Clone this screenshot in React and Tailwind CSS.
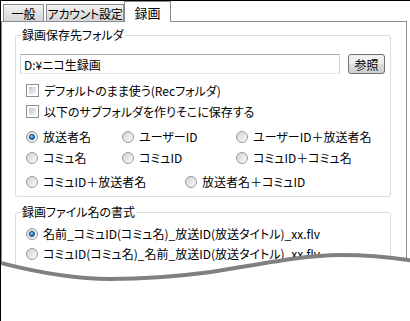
import React from "react";

function Radio({ checked, label, className = "" }) {
  return (
    <div className={"flex items-center h-[13px] " + className}>
      <span className="w-[12px] h-[12px] shrink-0 rounded-full border border-[#9a9a9a] bg-[linear-gradient(135deg,#d2d2d2,#fbfbfb)] flex items-center justify-center">
        {checked && (
          <span className="w-[6px] h-[6px] rounded-full border border-[#0b3e7a] bg-[radial-gradient(circle_at_35%_30%,#9ad8ff,#2a86d8_55%,#0d4e9a)]" />
        )}
      </span>
      <span className="ml-[5px] whitespace-nowrap">{label}</span>
    </div>
  );
}

function Check({ label }) {
  return (
    <div className="flex items-center h-[13px]">
      <span className="w-[13px] h-[13px] shrink-0 border border-[#8e8f8f] bg-white p-[2px] flex">
        <span className="flex-1 bg-[linear-gradient(135deg,#c4c7cb,#f5f5f5)]" />
      </span>
      <span className="ml-[5px] whitespace-nowrap">{label}</span>
    </div>
  );
}

export default function App() {
  return (
    <div className="relative w-[410px] h-[321px] overflow-hidden bg-white border-t border-l border-black text-black text-[12px] leading-[13px] font-['Noto_Sans_CJK_JP','Noto_Sans',sans-serif] [font-feature-settings:'palt']">
      {/* tab strip */}
      <div className="flex items-end h-[20px] pl-[2px]">
        <div className="w-[41px] h-[17px] border border-b-0 border-[#898c95] bg-[linear-gradient(#f3f3f3,#e3e3e3_50%,#d6d6d6)] flex items-center justify-center whitespace-nowrap">
          一般
        </div>
        <div className="ml-[2px] w-[78px] h-[17px] border border-b-0 border-[#898c95] bg-[linear-gradient(#f3f3f3,#e3e3e3_50%,#d6d6d6)] flex items-center justify-center whitespace-nowrap tracking-[-0.3px]">
          アカウント設定
        </div>
        <div className="relative z-10 -mb-[1px] w-[47px] h-[21px] border border-b-0 border-[#898c95] bg-white flex items-center justify-center text-[13px] whitespace-nowrap">
          録画
        </div>
      </div>

      {/* panel */}
      <div className="w-[406px] h-[300px] border border-[#898c95] bg-white pl-[13px] pr-[15px] pt-[6px]">
        <fieldset className="border border-[#d5dfe5] rounded-[3px] pl-[4px] pr-[5px] pb-[8px]">
          <legend className="ml-[1px] px-[1px] leading-[14px] whitespace-nowrap">録画保存先フォルダ</legend>
          <div className="flex items-center pt-[12px]">
            <div className="w-[320px] h-[20px] border border-[#abadb3] border-l-[#d0d6df] border-r-[#d0d6df] border-b-[#e3e9ef] flex items-center pl-[3px] whitespace-nowrap">
              D:¥ニコ生録画
            </div>
            <div className="ml-[8px] w-[37px] h-[20px] rounded-[3px] border border-[#707070] bg-[linear-gradient(#f2f2f2,#ebebeb_50%,#dddddd_50%,#cfcfcf)] flex items-center justify-center whitespace-nowrap">
              参照
            </div>
          </div>
          <div className="ml-[6px] flex flex-col">
            <div className="mt-[10px]">
              <Check label="デフォルトのまま使う(Recフォルダ)" />
            </div>
            <div className="mt-[8px]">
              <Check label="以下のサブフォルダを作りそこに保存する" />
            </div>
            <div className="mt-[12px] flex">
              <Radio checked className="w-[96px]" label="放送者名" />
              <Radio className="w-[114px]" label="ユーザーID" />
              <Radio label="ユーザーID＋放送者名" />
            </div>
            <div className="mt-[8px] flex">
              <Radio className="w-[96px]" label="コミュ名" />
              <Radio className="w-[114px]" label="コミュID" />
              <Radio label="コミュID＋コミュ名" />
            </div>
            <div className="mt-[11px] flex">
              <Radio className="w-[159px]" label="コミュID＋放送者名" />
              <Radio label="放送者名＋コミュID" />
            </div>
          </div>
        </fieldset>

        <fieldset className="mt-[8px] border border-[#d5dfe5] rounded-[3px] pl-[10px] pr-[5px] pb-[20px]">
          <legend className="-ml-[5px] px-[1px] leading-[14px] whitespace-nowrap">録画ファイル名の書式</legend>
          <div className="flex flex-col">
            <div className="mt-[8px]">
              <Radio checked label="名前_コミュID(コミュ名)_放送ID(放送タイトル)_xx.flv" />
            </div>
            <div className="mt-[7px]">
              <Radio label="コミュID(コミュ名)_名前_放送ID(放送タイトル)_xx.flv" />
            </div>
          </div>
        </fieldset>
      </div>

      {/* torn edge overlay */}
      <svg
        className="absolute left-0 top-0 z-20"
        width="410"
        height="321"
        viewBox="0 0 410 321"
      >
        <path
          d="M-4,261 C30,270 70,278 110,278 C150,278 180,275 210,271 C250,265 300,254 340,254 C370,254 395,257 414,260 L414,330 L-4,330 Z"
          fill="#ffffff"
        />
        <path
          d="M-4,261 C30,270 70,278 110,278 C150,278 180,275 210,271 C250,265 300,254 340,254 C370,254 395,257 414,260"
          fill="none"
          stroke="#808080"
          strokeWidth="4"
        />
      </svg>
    </div>
  );
}
